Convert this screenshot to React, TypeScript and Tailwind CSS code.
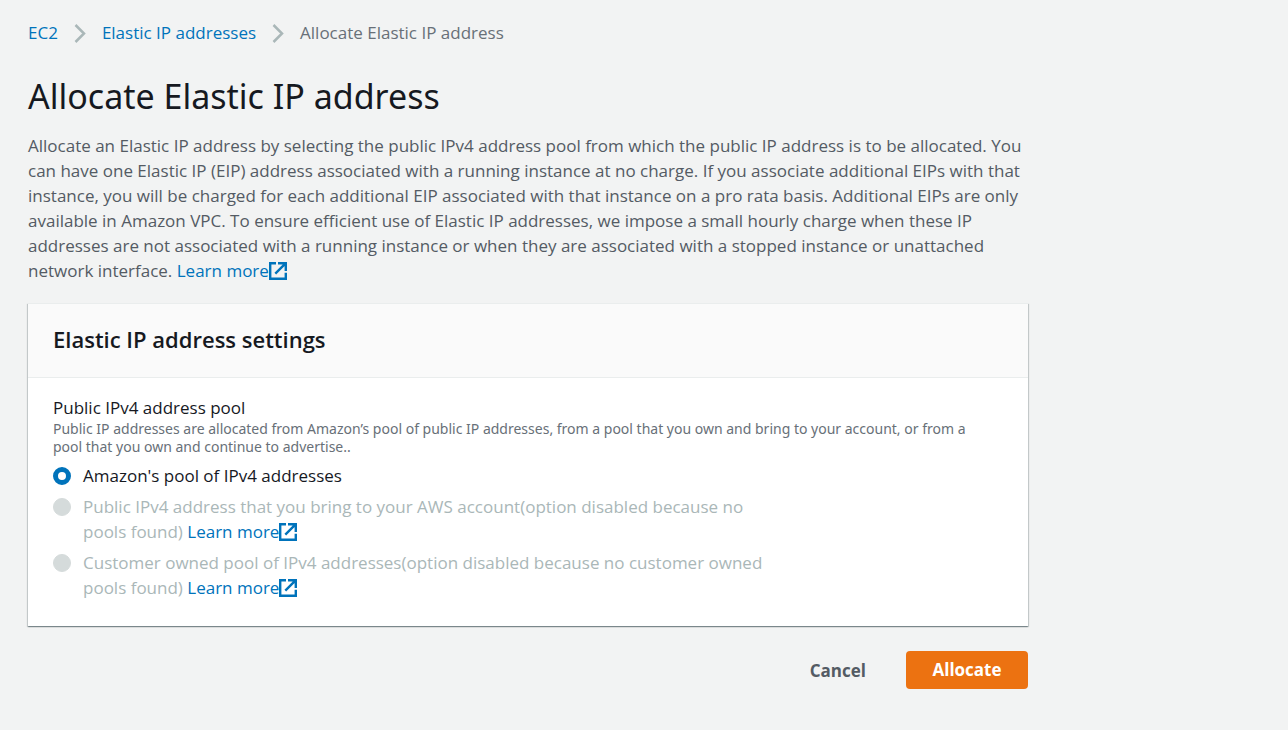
import { useState } from "react";

function ExternalIcon() {
  return (
    <svg viewBox="0 0 18 18" className="size-[18px] shrink-0" fill="none" stroke="currentColor" strokeWidth="2.4" aria-hidden="true">
      <path d="M7 1.2H1.2v15.6h15.6V10.8" />
      <path d="M9 1.2h7.8V9M16.3 1.7L6.3 11.7" />
    </svg>
  );
}

function LearnMore() {
  return (
    <a href="#learn-more" className="inline-flex items-center text-[#0073bb]">
      Learn more
      <ExternalIcon />
    </a>
  );
}

function Chevron() {
  return (
    <svg viewBox="0 0 12 20" className="h-5 w-3 shrink-0" fill="none" stroke="#aab7b8" strokeWidth="2.5" aria-hidden="true">
      <path d="M1.5 2L10 10.5L1.5 19" />
    </svg>
  );
}

const options = [
  { id: "amazon", label: "Amazon's pool of IPv4 addresses", disabled: false },
  { id: "byoip", label: "Public IPv4 address that you bring to your AWS account(option disabled because no pools found)", disabled: true },
  { id: "customer", label: "Customer owned pool of IPv4 addresses(option disabled because no customer owned pools found)", disabled: true },
];

export default function App() {
  const [pool, setPool] = useState("amazon");
  return (
    <div className="min-h-screen bg-[#f2f3f3] px-7 pt-5 pb-10 font-['Open_Sans','Noto_Sans',sans-serif] text-[17px] leading-[25px] text-[#545b64]">
      <main className="max-w-[1000px]">
        <nav aria-label="Breadcrumb" className="flex items-center gap-4">
          <a href="#ec2" className="text-[#0073bb]">EC2</a>
          <Chevron />
          <a href="#addresses" className="text-[#0073bb]">Elastic IP addresses</a>
          <Chevron />
          <span className="text-[#687078]">Allocate Elastic IP address</span>
        </nav>
        <h1 className="mt-7 font-['Noto_Sans',sans-serif] text-[34px] leading-[46px] text-[#16191f]">Allocate Elastic IP address</h1>
        <p className="mt-3.5">
          Allocate an Elastic IP address by selecting the public IPv4 address pool from which the public IP address is to be allocated. You can have one Elastic IP (EIP) address associated with a running instance at no charge. If you associate additional EIPs with that instance, you will be charged for each additional EIP associated with that instance on a pro rata basis. Additional EIPs are only available in Amazon VPC. To ensure efficient use of Elastic IP addresses, we impose a small hourly charge when these IP addresses are not associated with a running instance or when they are associated with a stopped instance or unattached network interface. <LearnMore />
        </p>
        <form>
          <section className="mt-5 bg-white shadow-[0_1px_1px_0_rgba(0,28,36,0.3),1px_1px_1px_0_rgba(0,28,36,0.15),-1px_1px_1px_0_rgba(0,28,36,0.15)]">
            <h2 className="border-t border-b border-[#eaeded] bg-[#fafafa] px-[25px] pt-[23px] pb-[25px] text-[22px] font-semibold text-[#16191f]">Elastic IP address settings</h2>
            <fieldset className="px-[25px] pt-[17px] pb-[26px]">
              <legend className="contents text-[#16191f]">Public IPv4 address pool</legend>
              <p className="pr-5 font-['Noto_Sans',sans-serif] text-[14px] leading-[18px] text-[#687078]">
                Public IP addresses are allocated from Amazon’s pool of public IP addresses, from a pool that you own and bring to your account, or from a pool that you own and continue to advertise..
              </p>
              <div className="mt-[7px] flex flex-col gap-1.5">
                {options.map((o) => (
                  <div key={o.id} className="flex gap-3">
                    <input
                      id={o.id}
                      type="radio"
                      name="pool"
                      checked={pool === o.id}
                      disabled={o.disabled}
                      onChange={() => setPool(o.id)}
                      className="mt-1 size-[18px] shrink-0 appearance-none rounded-full border border-[#879596] bg-white checked:border-[5px] checked:border-[#0073bb] disabled:border-[#d5dbdb] disabled:bg-[#d5dbdb]"
                    />
                    <div className={o.disabled ? "max-w-[690px] text-[#aab7b8]" : "max-w-[690px] text-[#16191f]"}>
                      <label htmlFor={o.id}>{o.label}</label> {o.disabled && <LearnMore />}
                    </div>
                  </div>
                ))}
              </div>
            </fieldset>
          </section>
          <div className="mt-[25px] flex items-center justify-end gap-10">
            <button type="button" className="font-bold">Cancel</button>
            <button type="submit" className="h-[38px] min-w-[122px] rounded-sm bg-[#ec7211] px-6 pb-0.5 font-bold text-white">Allocate</button>
          </div>
        </form>
      </main>
    </div>
  );
}
